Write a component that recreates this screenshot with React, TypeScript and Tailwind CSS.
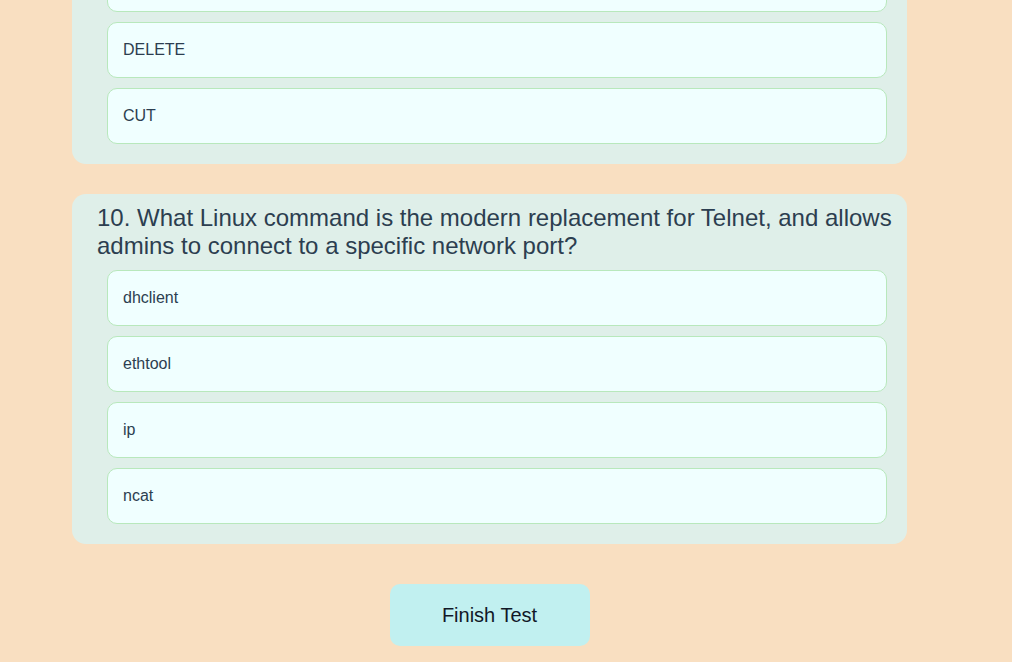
import React from "react";

const Option = ({ label }: { label: string }) => (
  <div className="ml-[35px] mr-[20px] h-[56px] rounded-[10px] border border-[#b8e8bc] bg-[#f0ffff] pl-[15px] flex items-center text-[16px] text-[#2c3e50]">
    {label}
  </div>
);

export default function App() {
  return (
    <div
      className="min-h-[662px] bg-[#f9dfc1] overflow-hidden"
      style={{ fontFamily: '"Liberation Sans", Arial, sans-serif' }}
    >
      <div className="ml-[72px] w-[835px]">
        <div className="-mt-[44px] rounded-b-[14px] bg-[#dfefe9] pb-[20px] flex flex-col gap-[10px]">
          <Option label="" />
          <Option label="DELETE" />
          <Option label="CUT" />
        </div>
        <div className="mt-[30px] rounded-[14px] bg-[#dfefe9] pt-[10px] pb-[20px] flex flex-col gap-[10px]">
          <div className="pl-[25px] pr-[10px] text-[24px] leading-[28px] text-[#2c3e50]">
            10. What Linux command is the modern replacement for Telnet, and allows admins to connect to a specific network port?
          </div>
          <Option label="dhclient" />
          <Option label="ethtool" />
          <Option label="ip" />
          <Option label="ncat" />
        </div>
        <div className="mt-[40px] flex justify-center">
          <button className="w-[200px] h-[62px] rounded-[10px] bg-[#c1f0f0] text-[20px] text-[#111827]">
            Finish Test
          </button>
        </div>
      </div>
    </div>
  );
}
